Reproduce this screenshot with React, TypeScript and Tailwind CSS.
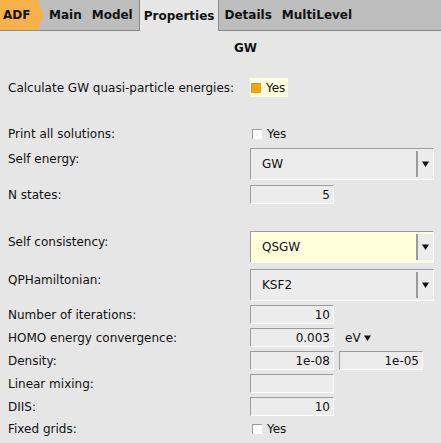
import React from 'react';

const tabs = ['Main', 'Model', 'Properties', 'Details', 'MultiLevel'];

function Check(props: { on?: boolean }) {
  return (
    <span
      className={
        'inline-block h-[10px] w-[10px] border-t border-l border-[#9a9a9a] ' +
        (props.on ? 'bg-[#f7a600]' : 'bg-white')
      }
    />
  );
}

function Input(props: { value?: string }) {
  return (
    <div className="flex h-[19px] w-[84px] items-center justify-end border-t border-l border-[#9c9c9c] border-b border-r border-b-white border-r-white bg-[#ececec] pr-[3px] text-[12px] leading-none text-[#111]">
      {props.value}
    </div>
  );
}

function Select(props: { value: string; hl?: boolean }) {
  return (
    <div
      className={
        'flex h-[32px] w-[184px] items-stretch border-t border-l border-[#9c9c9c] border-b border-r border-b-white border-r-white ' +
        (props.hl ? 'bg-[#ffffdc]' : 'bg-[#ececec]')
      }
    >
      <div className="flex flex-1 items-center pl-[11px] text-[12px] text-[#111]">{props.value}</div>
      <div className="my-[2px] flex w-[17px] items-center justify-center border-l-2 border-l-[#9a9a9a] bg-[#ececec]">
        <svg width="7" height="6" viewBox="0 0 7 6">
          <path d="M0 0.5h7L3.5 6z" fill="#111" />
        </svg>
      </div>
    </div>
  );
}

function Row(props: { label: string; mt: string; children?: React.ReactNode; top?: boolean }) {
  return (
    <div className={'flex ' + (props.top ? 'items-start ' : 'items-center ') + props.mt}>
      <div className={'w-[242px] shrink-0 text-[12px] text-[#111] ' + (props.top ? 'pt-[2px]' : '')}>{props.label}</div>
      <div className="flex items-center">{props.children}</div>
    </div>
  );
}

export default function App() {
  return (
    <div
      className="h-[443px] w-[441px] overflow-hidden bg-[#e6e6e6] text-[#111]"
      style={{ fontFamily: '"DejaVu Sans", Verdana, sans-serif' }}
    >
      <div className="flex h-[31px] items-stretch border-b border-[#8a8a8a] bg-[#bdbdbd] text-[12px] font-bold">
        <div className="relative flex w-[44px] items-center pl-[3px]">
          <svg className="absolute inset-0" width="44" height="30" viewBox="0 0 44 30">
            <path d="M0 0h38l6 15l-6 15H0z" fill="#f6b248" />
          </svg>
          <span className="relative">ADF</span>
        </div>
        {tabs.map((t) =>
          t === 'Properties' ? (
            <div
              key={t}
              className="-mb-px ml-px flex items-center border-x border-[#8a8a8a] bg-[#e6e6e6] px-[4px]"
            >
              {t}
            </div>
          ) : (
            <div key={t} className="flex items-center px-[5px] first:pl-[6px]">
              {t}
            </div>
          ),
        )}
      </div>

      <div className="flex h-[34px] items-center justify-center pl-[50px] text-[12px] font-bold">GW</div>

      <div className="pl-[8px]">
        <Row label="Calculate GW quasi-particle energies:" mt="mt-[13px]">
          <div className="flex h-[19px] items-center gap-[5px] bg-[#ffffdc] pl-[1px] pr-[3px]">
            <Check on />
            <span className="text-[12px]">Yes</span>
          </div>
        </Row>

        <Row label="Print all solutions:" mt="mt-[27px]">
          <div className="flex h-[19px] items-center gap-[5px] pl-[2px]">
            <Check />
            <span className="text-[12px]">Yes</span>
          </div>
        </Row>

        <Row label="Self energy:" mt="mt-[5px]" top>
          <Select value="GW" />
        </Row>

        <Row label="N states:" mt="mt-[5px]">
          <Input value="5" />
        </Row>

        <Row label="Self consistency:" mt="mt-[27px]" top>
          <Select value="QSGW" hl />
        </Row>

        <Row label="QPHamiltonian:" mt="mt-[6px]" top>
          <Select value="KSF2" />
        </Row>

        <Row label="Number of iterations:" mt="mt-[4px]">
          <Input value="10" />
        </Row>

        <Row label="HOMO energy convergence:" mt="mt-[4px]">
          <Input value="0.003" />
          <span className="ml-[11px] flex items-center gap-[3px] text-[12px]">
            eV
            <svg width="7" height="6" viewBox="0 0 7 6">
              <path d="M0 0.5h7L3.5 6z" fill="#111" />
            </svg>
          </span>
        </Row>

        <Row label="Density:" mt="mt-[4px]">
          <Input value="1e-08" />
          <div className="ml-[5px]">
            <Input value="1e-05" />
          </div>
        </Row>

        <Row label="Linear mixing:" mt="mt-[4px]">
          <Input />
        </Row>

        <Row label="DIIS:" mt="mt-[4px]">
          <Input value="10" />
        </Row>

        <Row label="Fixed grids:" mt="mt-[3px]">
          <div className="flex h-[19px] items-center gap-[5px] pl-[2px]">
            <Check />
            <span className="text-[12px]">Yes</span>
          </div>
        </Row>
      </div>
    </div>
  );
}
